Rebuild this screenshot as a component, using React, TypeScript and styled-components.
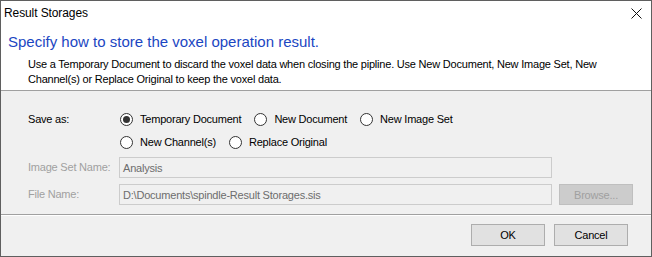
import React from 'react';
import styled, { createGlobalStyle } from 'styled-components';

const GlobalStyle = createGlobalStyle`
  html, body {
    margin: 0;
    padding: 0;
    background: #ffffff;
  }
  body {
    font-family: "Liberation Sans", Arial, sans-serif;
    font-size: 11px;
    letter-spacing: -0.21px;
    color: #000;
  }
`;

const Window = styled.div`
  width: 652px;
  height: 257px;
  box-sizing: border-box;
  border: 1px solid #5f5f5f;
  background: #f0f0f0;
  display: flex;
  flex-direction: column;
  overflow: hidden;
`;

const Header = styled.div`
  background: #ffffff;
  height: 89px;
  border-bottom: 1px solid #a0a0a0;
`;

const TitleBar = styled.div`
  height: 27px;
  display: flex;
  align-items: center;
  justify-content: space-between;
  padding: 0 9px 0 3px;
  margin-top: -2px;
`;

const TitleText = styled.span`
  font-size: 12px;
  letter-spacing: -0.1px;
  color: #000;
`;

const CloseIcon = () => (
  <svg width="11" height="11" viewBox="0 0 11 11" style={{ marginTop: 2 }}>
    <path d="M0.5 0.5L10.5 10.5M10.5 0.5L0.5 10.5" stroke="#111" strokeWidth="1" fill="none" />
  </svg>
);

const Heading = styled.div`
  font-size: 15px;
  letter-spacing: 0;
  line-height: 20px;
  color: #1b46c2;
  padding-left: 7px;
  margin-top: 6px;
`;

const Description = styled.div`
  line-height: 15px;
  padding-left: 27px;
  margin-top: 5px;
`;

const Body = styled.div`
  flex: 1;
  display: grid;
  grid-template-columns: 91px 1fr;
  align-content: start;
  padding: 18px 19px 0 27px;
  border-bottom: 1px solid #a0a0a0;
`;

const Label = styled.div<{ $disabled?: boolean; $top?: number }>`
  display: flex;
  align-items: center;
  height: 20px;
  margin-top: ${p => p.$top ?? 0}px;
  color: ${p => (p.$disabled ? '#a0a0a0' : '#000')};
`;

const RadioRow = styled.div<{ $top?: number }>`
  display: flex;
  align-items: center;
  gap: 12px;
  height: 20px;
  margin-top: ${p => p.$top ?? 0}px;
`;

const RadioOption = styled.label`
  display: flex;
  align-items: center;
  gap: 7px;
  padding-left: 1px;
`;

const RadioCircle = styled.span<{ $checked?: boolean }>`
  width: 13px;
  height: 13px;
  box-sizing: border-box;
  border: 1px solid #333;
  border-radius: 50%;
  background: #fff;
  display: flex;
  align-items: center;
  justify-content: center;

  &::after {
    content: '';
    width: 7px;
    height: 7px;
    border-radius: 50%;
    background: ${p => (p.$checked ? '#333' : 'transparent')};
  }
`;

const FieldRow = styled.div<{ $top?: number }>`
  display: flex;
  align-items: center;
  gap: 7px;
  margin-top: ${p => p.$top ?? 0}px;
`;

const TextBox = styled.div`
  width: 433px;
  height: 21px;
  box-sizing: border-box;
  border: 1px solid #cccccc;
  background: #f0f0f0;
  color: #6d6d6d;
  display: flex;
  align-items: center;
  padding-left: 3px;
`;

const BrowseButton = styled.div`
  width: 74px;
  height: 21px;
  box-sizing: border-box;
  border: 1px solid #bfbfbf;
  background: #cccccc;
  color: #a0a0a0;
  display: flex;
  align-items: center;
  justify-content: center;
`;

const Footer = styled.div`
  height: 41px;
  border-top: 1px solid #ffffff;
  display: flex;
  justify-content: flex-end;
  align-items: flex-start;
  gap: 9px;
  padding: 8px 23px 0 0;
  box-sizing: border-box;
`;

const Button = styled.div`
  width: 74px;
  height: 22px;
  box-sizing: border-box;
  border: 1px solid #adadad;
  background: #e1e1e1;
  display: flex;
  align-items: center;
  justify-content: center;
`;

const Radio = ({ label, checked }: { label: string; checked?: boolean }) => (
  <RadioOption>
    <RadioCircle $checked={checked} />
    {label}
  </RadioOption>
);

export default function App() {
  return (
    <>
      <GlobalStyle />
      <Window>
        <Header>
          <TitleBar>
            <TitleText>Result Storages</TitleText>
            <CloseIcon />
          </TitleBar>
          <Heading>Specify how to store the voxel operation result.</Heading>
          <Description>
            Use a Temporary Document to discard the voxel data when closing the pipline. Use New Document, New Image Set, New
            <br />
            Channel(s) or Replace Original to keep the voxel data.
          </Description>
        </Header>
        <Body>
          <Label>Save as:</Label>
          <RadioRow>
            <Radio label="Temporary Document" checked />
            <Radio label="New Document" />
            <Radio label="New Image Set" />
          </RadioRow>
          <div />
          <RadioRow $top={3}>
            <Radio label="New Channel(s)" />
            <Radio label="Replace Original" />
          </RadioRow>
          <Label $disabled $top={5}>Image Set Name:</Label>
          <FieldRow $top={5}>
            <TextBox>Analysis</TextBox>
          </FieldRow>
          <Label $disabled $top={6}>File Name:</Label>
          <FieldRow $top={6}>
            <TextBox>D:\Documents\spindle-Result Storages.sis</TextBox>
            <BrowseButton>Browse...</BrowseButton>
          </FieldRow>
        </Body>
        <Footer>
          <Button>OK</Button>
          <Button>Cancel</Button>
        </Footer>
      </Window>
    </>
  );
}
